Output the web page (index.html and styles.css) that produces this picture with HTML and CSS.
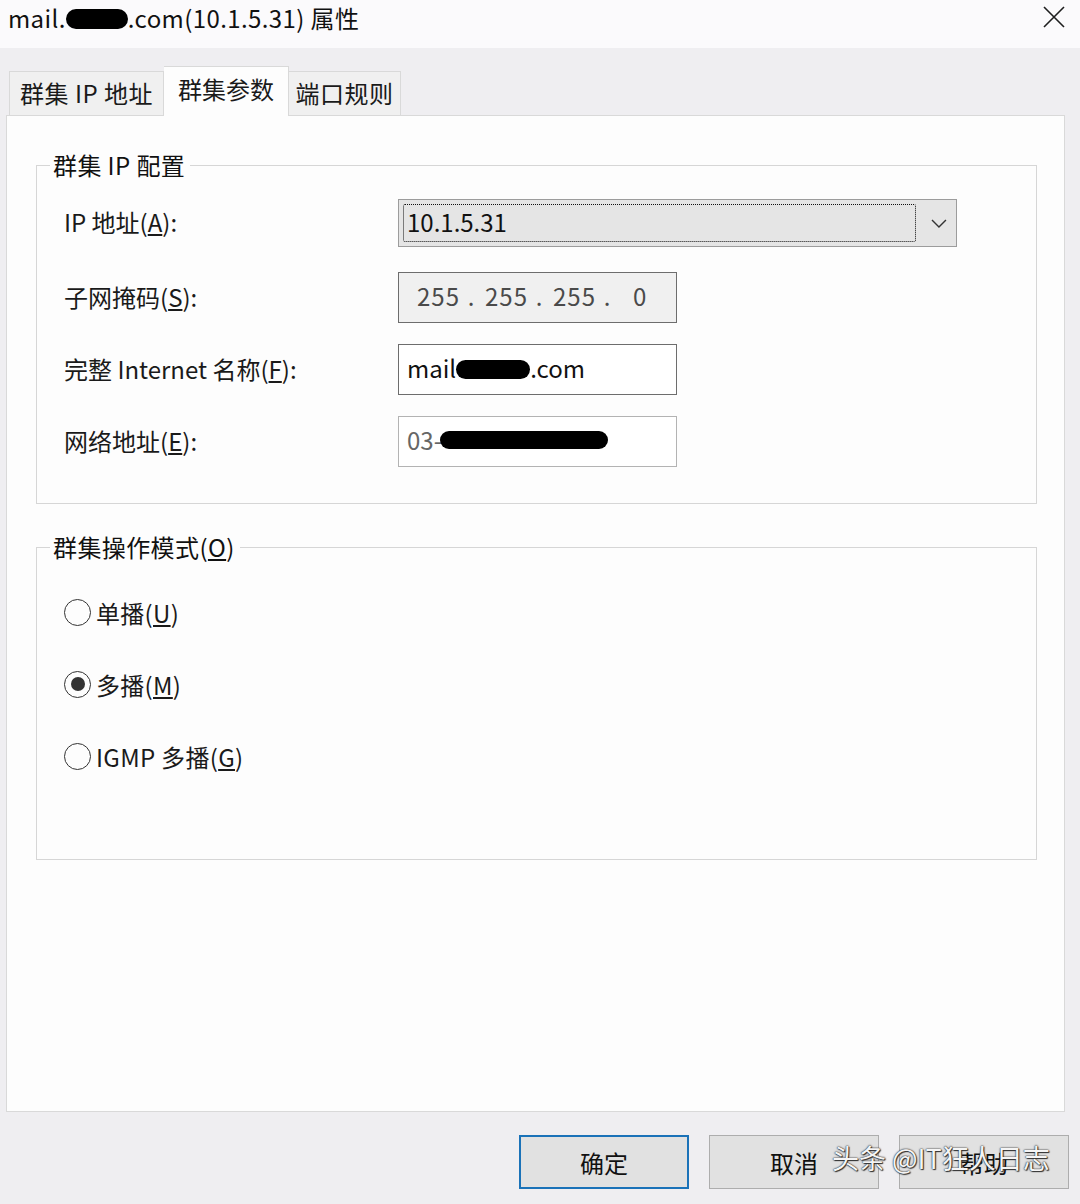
FILE: index.html
```html
<!DOCTYPE html>
<html lang="zh">
<head>
<meta charset="utf-8">
<link rel="stylesheet" href="styles.css">
</head>
<body>
<div class="window">
  <header class="titlebar">
    <div class="title">mail.<span class="blob blob-title"></span>.com(10.1.5.31) 属性</div>
    <svg class="close" width="24" height="24" viewBox="0 0 24 24"><path d="M2 2 L22 22 M22 2 L2 22" stroke="#1e1e1e" stroke-width="1.6" fill="none"/></svg>
  </header>
  <main class="body">
    <nav class="tabs">
      <div class="tab tab1">群集 IP 地址</div>
      <div class="tab active">群集参数</div>
      <div class="tab tab3">端口规则</div>
    </nav>
    <section class="panel">
      <fieldset class="group group1">
        <legend>群集 IP 配置</legend>
        <div class="row row-first">
          <label class="lbl">IP 地址(<u>A</u>):</label>
          <div class="combo">
            <div class="focus">10.1.5.31</div>
            <svg class="chev" width="18" height="12" viewBox="0 0 18 12"><path d="M2 3 L9 10 L16 3" stroke="#333" stroke-width="1.4" fill="none"/></svg>
          </div>
        </div>
        <div class="row">
          <label class="lbl">子网掩码(<u>S</u>):</label>
          <div class="field field-ip">
            <span class="oct">255</span><span class="dot">.</span><span class="oct">255</span><span class="dot">.</span><span class="oct">255</span><span class="dot">.</span><span class="oct oct-last">0</span>
          </div>
        </div>
        <div class="row">
          <label class="lbl">完整 Internet 名称(<u>F</u>):</label>
          <div class="field field-name">mail<span class="blob blob-name"></span>.com</div>
        </div>
        <div class="row">
          <label class="lbl">网络地址(<u>E</u>):</label>
          <div class="field field-mac">03-<span class="blob blob-mac"></span></div>
        </div>
      </fieldset>
      <fieldset class="group group2">
        <legend>群集操作模式(<u>O</u>)</legend>
        <div class="radio"><span class="circle"></span>单播(<u>U</u>)</div>
        <div class="radio"><span class="circle checked"></span>多播(<u>M</u>)</div>
        <div class="radio"><span class="circle"></span>IGMP 多播(<u>G</u>)</div>
      </fieldset>
    </section>
    <footer class="buttons">
      <button class="btn default">确定</button>
      <button class="btn">取消</button>
      <button class="btn">帮助</button>
      <div class="watermark">头条 @IT狂人日志</div>
    </footer>
  </main>
</div>
</body>
</html>
```

FILE: styles.css
```css
* { box-sizing: border-box; }
html, body { margin: 0; padding: 0; }
body {
  width: 1080px;
  height: 1204px;
  overflow: hidden;
  font-family: "Noto Sans CJK SC", "Noto Sans", sans-serif;
  color: #1a1a1a;
  background: #efeef1;
}
.window { width: 1080px; height: 1204px; display: flex; flex-direction: column; }
.titlebar {
  height: 48px;
  background: #fbfafc;
  display: flex;
  align-items: flex-start;
  justify-content: space-between;
  padding: 0 14px 0 8px;
}
.title {
  font-size: 24px;
  line-height: 36px;
  color: #111;
  display: flex;
  align-items: center;
  white-space: pre;
  letter-spacing: 0.4px;
}
.close { margin-top: 5px; }
.blob { display: inline-block; background: #000; border-radius: 12px; }
.blob-title { width: 62px; height: 20px; margin-top: 2px; }
.body { flex: 1; display: flex; flex-direction: column; padding: 0 15px 0 6px; }
.tabs { display: flex; align-items: flex-end; height: 67px; padding-left: 3px; }
.tab {
  height: 45px;
  margin-bottom: -1px;
  border: 1px solid #d9d9d9;
  border-bottom: none;
  background: #f0f0f0;
  font-size: 24px;
  line-height: 42px;
  white-space: pre;
  color: #1a1a1a;
  text-align: center;
}
.tab1 { width: 155px; letter-spacing: 0.5px; }
.tab3 { width: 112px; border-left: none; letter-spacing: 0.5px; }
.tab.active {
  width: 125px;
  height: 50px;
  background: #fdfdfd;
  line-height: 44px;
  border-left: none;
  border-right: 1px solid #d9d9d9;
  position: relative;
  z-index: 1;
}
.panel {
  height: 997px;
  background: #fdfdfd;
  border: 1px solid #d9d9d9;
  display: flex;
  flex-direction: column;
}
.group {
  margin: 0 27px 0 29px;
  border: 1px solid #d6d6d6;
  padding: 0 27px;
  min-width: 0;
}
.group legend {
  font-size: 24px;
  line-height: 28px;
  padding: 0 5px 0 3px;
  margin-left: -14px;
  color: #111;
  letter-spacing: 0.4px;
}
.group1 { margin-top: 35px; padding-top: 20px; padding-bottom: 35px; height: 353px; }
.group2 { margin-top: 29px; padding-top: 15px; height: 327px; }
.row { display: flex; align-items: center; margin-top: 21px; }
.row-first { margin-top: 0; }
.row:nth-child(3) { margin-top: 25px; }
.lbl { width: 334px; font-size: 24px; line-height: 30px; color: #1a1a1a; white-space: pre; padding-bottom: 2px; }
.combo {
  width: 559px;
  height: 48px;
  background: #e5e5e5;
  border: 1px solid #9c9c9c;
  display: flex;
  align-items: center;
  padding: 4px 8px 4px 4px;
}
.focus {
  width: 515px;
  height: 38px;
  border: 1.5px dotted #111;
  border-radius: 2px;
  font-size: 24px;
  line-height: 34px;
  padding-left: 3px;
  color: #111;
}
.chev { margin-left: 14px; }
.field {
  width: 279px;
  height: 51px;
  border: 1px solid #6d6d6d;
  background: #fff;
  font-size: 24px;
  display: flex;
  align-items: center;
  padding-left: 8px;
  padding-bottom: 5px;
  white-space: pre;
}
.field-ip { background: #f0f0f0; color: #4a4a4a; padding-left: 18px; }
.oct { width: 40px; text-align: center; letter-spacing: 1px; }
.dot { width: 28px; text-align: center; }
.oct-last { margin-left: 12px; width: 14px; }
.field-name { color: #111; }
.blob-name { width: 74px; height: 19px; margin-top: 4px; }
.field-mac { border-color: #b3b3b3; color: #666; }
.blob-mac { width: 168px; height: 18px; margin-top: 2px; margin-left: -2px; }
.radio {
  height: 72px;
  display: flex;
  align-items: center;
  font-size: 24px;
  color: #1a1a1a;
  white-space: pre;
  letter-spacing: 0.3px;
}
.circle {
  width: 27px;
  height: 27px;
  border: 1.6px solid #333;
  border-radius: 50%;
  margin-right: 5px;
  display: flex;
  align-items: center;
  justify-content: center;
}
.circle.checked::after {
  content: "";
  width: 14px;
  height: 14px;
  border-radius: 50%;
  background: #333;
}
.buttons {
  flex: 1;
  display: flex;
  justify-content: flex-end;
  align-items: flex-start;
  gap: 20px;
  padding-top: 23px;
  margin-right: -4px;
  position: relative;
}
.btn {
  width: 170px;
  height: 54px;
  background: #e1e1e1;
  border: 1px solid #adadad;
  font-family: "Noto Sans CJK SC", sans-serif;
  font-size: 24px;
  color: #111;
  padding: 0;
}
.btn.default { border: 2px solid #1a72b8; }
.watermark {
  position: absolute;
  left: 826px;
  top: 28px;
  font-size: 27px;
  line-height: 36px;
  color: #f5f5f5;
  text-shadow: 0 0 1px #222, 0 0 2px #333, 1px 1px 1px #333;
  white-space: pre;
}
```
